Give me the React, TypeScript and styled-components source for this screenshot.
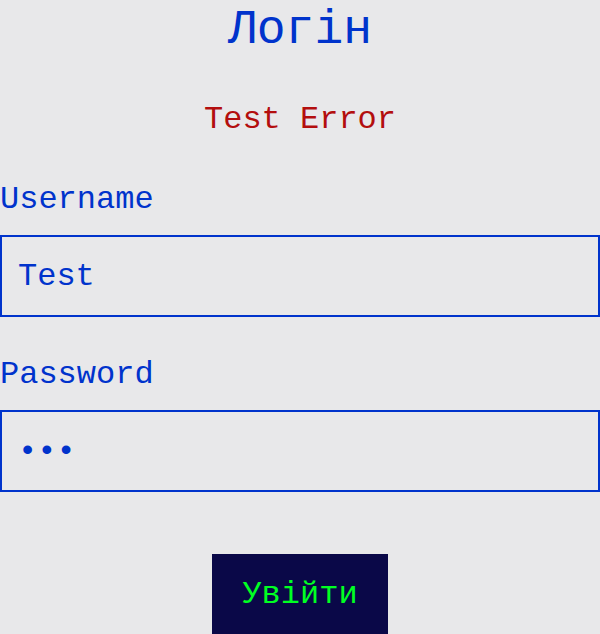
import React from "react";
import styled, { createGlobalStyle } from "styled-components";

const Global = createGlobalStyle`
  html, body { margin: 0; padding: 0; background: #e8e8ea; }
  body { font-family: "Liberation Mono", "DejaVu Sans Mono", monospace; }
  * { box-sizing: border-box; }
`;

const Page = styled.div`
  width: 600px;
  display: flex;
  flex-direction: column;
  align-items: stretch;
`;

const Title = styled.h1`
  margin: 0;
  font-size: 48px;
  font-weight: normal;
  line-height: 60px;
  color: #0033cc;
  text-align: center;
`;

const ErrorText = styled.p`
  margin: 40px 0 0;
  font-size: 32px;
  line-height: 40px;
  color: #b30e0e;
  text-align: center;
`;

const Form = styled.form`
  display: flex;
  flex-direction: column;
`;

const Field = styled.div<{ $top: number }>`
  display: flex;
  flex-direction: column;
  gap: 15px;
  margin-top: ${(p) => p.$top}px;
`;

const Label = styled.label`
  font-size: 32px;
  line-height: 40px;
  color: #0033cc;
`;

const Input = styled.input`
  width: 100%;
  height: 82px;
  margin: 0;
  padding: 0 16px;
  border: 2px solid #0033cc;
  background: #e8e8ea;
  font-family: "Liberation Mono", "DejaVu Sans Mono", monospace;
  font-size: 32px;
  color: #0033cc;
  outline: none;
`;

const Button = styled.button`
  align-self: center;
  margin-top: 62px;
  padding: 22px 30px 26px;
  border: none;
  background: #0a0848;
  color: #00ff22;
  font-family: "Liberation Mono", "DejaVu Sans Mono", monospace;
  font-size: 32px;
  cursor: pointer;
`;

export default function App() {
  return (
    <Page>
      <Global />
      <Title>Логін</Title>
      <ErrorText>Test Error</ErrorText>
      <Form onSubmit={(e) => e.preventDefault()}>
        <Field $top={40}>
          <Label htmlFor="username">Username</Label>
          <Input id="username" type="text" defaultValue="Test" />
        </Field>
        <Field $top={38}>
          <Label htmlFor="password">Password</Label>
          <Input id="password" type="password" defaultValue="abc" />
        </Field>
        <Button type="submit">Увійти</Button>
      </Form>
    </Page>
  );
}
